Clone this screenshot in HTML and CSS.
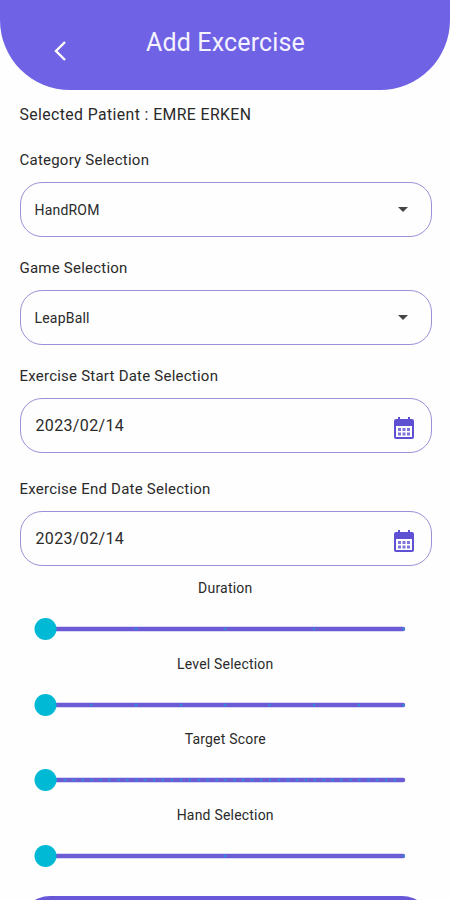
FILE: index.html
```html
<!DOCTYPE html>
<html lang="en">
<head>
  <meta charset="utf-8">
  <title>Add Excercise</title>
  <link rel="stylesheet" href="styles.css">
</head>
<body>
  <header class="header">
    <svg class="back" viewBox="0 0 12 20"><path d="M11 1 L2 10 L11 19"/></svg>
    <h1 class="title">Add Excercise</h1>
  </header>

  <main class="form">
    <p class="patient">Selected Patient : EMRE ERKEN</p>

    <div class="label">Category Selection</div>
    <div class="field">
      <span>HandROM</span>
      <svg class="arrow" viewBox="0 0 10 5"><path d="M0 0h10L5 5z"/></svg>
    </div>

    <div class="label">Game Selection</div>
    <div class="field">
      <span>LeapBall</span>
      <svg class="arrow" viewBox="0 0 10 5"><path d="M0 0h10L5 5z"/></svg>
    </div>

    <div class="label">Exercise Start Date Selection</div>
    <div class="field date">
      <span>2023/02/14</span>
      <svg class="calendar" viewBox="0 0 20 22">
        <path fill-rule="evenodd" d="M4 0h2v2h8V0h2v2h2a2 2 0 0 1 2 2v16a2 2 0 0 1-2 2H2a2 2 0 0 1-2-2V4a2 2 0 0 1 2-2h2zM2 9v11h16V9z"/>
        <path class="days" d="M4 11h3v3H4zM8.500 11h3v3h-3zM13 11h3v3h-3zM4 15.500h3v3H4zM8.500 15.500h3v3h-3zM13 15.500h3v3h-3z"/>
      </svg>
    </div>

    <div class="label end">Exercise End Date Selection</div>
    <div class="field date">
      <span>2023/02/14</span>
      <svg class="calendar" viewBox="0 0 20 22">
        <path fill-rule="evenodd" d="M4 0h2v2h8V0h2v2h2a2 2 0 0 1 2 2v16a2 2 0 0 1-2 2H2a2 2 0 0 1-2-2V4a2 2 0 0 1 2-2h2zM2 9v11h16V9z"/>
        <path class="days" d="M4 11h3v3H4zM8.500 11h3v3h-3zM13 11h3v3h-3zM4 15.500h3v3H4zM8.500 15.500h3v3h-3zM13 15.500h3v3h-3z"/>
      </svg>
    </div>

    <div class="sliders">
      <div class="slider">
        <div class="name">Duration</div>
        <svg class="track" viewBox="0 0 372 24">
          <path class="line" d="M12 12H369"/>
          <path class="ticks" d="M102 12h.01M191 12h.01M280 12h.01M369.500 12h.01"/>
          <circle cx="11.500" cy="12" r="11"/>
        </svg>
      </div>
      <div class="slider">
        <div class="name">Level Selection</div>
        <svg class="track" viewBox="0 0 372 24">
          <path class="line" d="M12 12H369"/>
          <path class="ticks" d="M57.500 12h.01M102 12h.01M147 12h.01M191 12h.01M235.500 12h.01M280 12h.01M325 12h.01M369.500 12h.01"/>
          <circle cx="11.500" cy="12" r="11"/>
        </svg>
      </div>
      <div class="slider">
        <div class="name">Target Score</div>
        <svg class="track" viewBox="0 0 372 24">
          <path class="line" d="M12 12H369"/>
          <path class="ticks" stroke-dasharray="0.010 8.915" d="M13 12H370"/>
          <circle cx="11.500" cy="12" r="11"/>
        </svg>
      </div>
      <div class="slider">
        <div class="name">Hand Selection</div>
        <svg class="track" viewBox="0 0 372 24">
          <path class="line" d="M12 12H369"/>
          <path class="ticks" d="M191 12h.01M369.500 12h.01"/>
          <circle cx="11.500" cy="12" r="11"/>
        </svg>
      </div>
    </div>

    <div class="submit"></div>
  </main>
</body>
</html>
```
FILE: styles.css
```css
* {
  box-sizing: border-box;
}
body {
  margin: 0;
  background: #fefefe;
  color: #2a2a2a;
  font-family: Roboto, "Liberation Sans", sans-serif;
}
.header {
  display: grid;
  grid-template-columns: 92px 1fr 92px;
  height: 90px;
  background: #6f62e5;
  border-radius: 0 0 70px 70px;
}
.back {
  width: 12px;
  height: 20px;
  margin: 41px 0 0 54px;
  fill: none;
  stroke: #fff;
  stroke-width: 2.4;
}
.title {
  margin: 28px 0 0 1px;
  color: #f4f2ff;
  font-size: 25px;
  line-height: 30px;
  font-weight: 400;
  letter-spacing: 0.150px;
  text-align: center;
  white-space: nowrap;
}
.form {
  padding: 0 18.500px 0 19.500px;
}
.patient {
  margin: 0;
  height: 54px;
  padding-top: 15px;
  font-size: 15.800px;
  line-height: 20px;
  letter-spacing: 0.400px;
}
.label {
  height: 38px;
  padding-top: 6px;
  font-size: 15px;
  line-height: 20px;
  letter-spacing: 0.230px;
}
.field {
  display: flex;
  align-items: center;
  justify-content: space-between;
  height: 55px;
  margin-bottom: 15px;
  padding: 0 23px 0 14px;
  border: 1px solid #9b90d8;
  border-radius: 22px;
  font-size: 14px;
  letter-spacing: 0.200px;
}
.arrow {
  width: 10px;
  height: 5px;
  fill: #444;
}
.date {
  padding: 0 17px 0 15px;
  font-size: 16px;
  letter-spacing: 0.350px;
}
.end {
  height: 43px;
  padding-top: 11px;
}
.calendar {
  width: 20px;
  height: 22px;
  margin-top: 5px;
  fill: #5e50d2;
}
.days {
  opacity: 0.8;
}
.sliders {
  margin-top: -3px;
  padding-left: 14.500px;
}
.slider {
  height: 75.700px;
}
.name {
  height: 39px;
  margin-right: 15px;
  font-size: 14px;
  line-height: 20px;
  letter-spacing: 0.200px;
  text-align: center;
}
.track {
  display: block;
  width: 372px;
  height: 24px;
}
.line {
  stroke: #6b5cd6;
  stroke-width: 4.500;
  stroke-linecap: round;
}
.ticks {
  stroke: #2f8fd6;
  stroke-width: 2.500;
  stroke-linecap: round;
}
.track circle {
  fill: #00bad5;
}
.submit {
  height: 4px;
  margin-top: 15px;
  overflow: hidden;
}
.submit::before {
  content: "";
  display: block;
  height: 60px;
  background: #6858d8;
  border-radius: 30px;
}
```
